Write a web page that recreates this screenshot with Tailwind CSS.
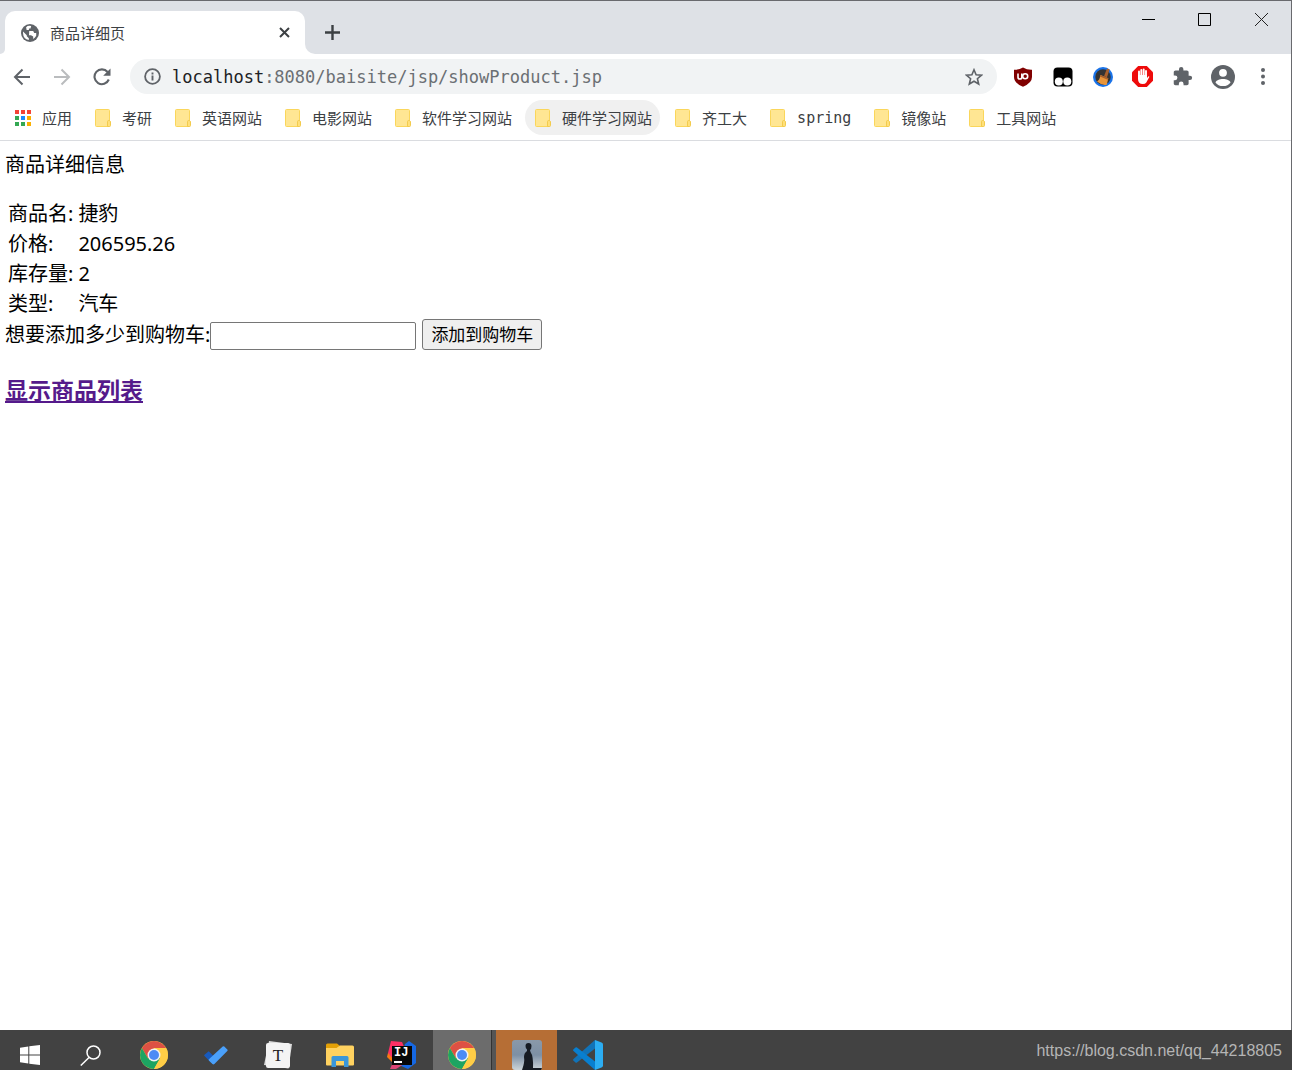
<!DOCTYPE html>
<html lang="zh-CN">
<head>
<meta charset="utf-8">
<title>商品详细页</title>
<script src="https://cdn.jsdelivr.net/npm/@tailwindcss/browser@4"></script>
</head>
<body class="flex h-screen flex-col overflow-hidden bg-white font-['Noto_Sans','Noto_Sans_CJK_SC',sans-serif] text-black">
<svg class="hidden">
  <symbol id="folder" viewBox="0 0 16 18">
    <rect x="0.5" y="0.5" width="14" height="17" rx="1" fill="#ffe693" stroke="#fad65b"/>
    <path d="M12.500 17.500v-5q0-1 1.200-1t1.800 1v4q0 1-1 1z" fill="#ffe07a" stroke="#f3cb4d"/>
  </symbol>
  <symbol id="chrome" viewBox="0 0 28 28">
    <circle cx="14" cy="14" r="14" fill="#ffcd46"/>
    <path d="M14 7h12.100A14 14 0 0 0 1.900 7L8 17.500z" fill="#dd5144"/>
    <path d="M1.900 7A14 14 0 0 0 14 28l6-10.500-6-3.500-6 3.500z" fill="#1da462"/>
    <path d="M14 7h12.100A14 14 0 0 1 14 28l6-10.500z" fill="#ffcd46"/>
    <circle cx="14" cy="14" r="6.500" fill="#f1f1f1"/>
    <circle cx="14" cy="14" r="5" fill="#4c8bf5"/>
  </symbol>
</svg>

<div class="flex min-h-0 flex-1 flex-col border-t border-r border-[#696a6e]">
  <header class="shrink-0">
    <div class="flex h-[53px] items-end bg-[#dee1e6]">
      <div class="h-[43px] w-[5px] bg-white"><div class="h-full rounded-br-[5px] bg-[#dee1e6]"></div></div>
      <div class="flex h-[43px] w-[300px] items-center rounded-t-[10px] bg-white pr-[13px] pl-4">
        <svg class="size-[18px]" viewBox="0 0 18 18"><circle cx="9" cy="9" r="9" fill="#5f6368"/><path d="M2 7.500 5.800 11.300v1l2 1.900v1.800Q2.200 15 2 9zM10.200 2.100Q7 1.300 5.100 3.200L5.600 6h2.300V4.600h1.600zM8.200 7h4l1 1.900h2v2.900q-1 2-3 3.300v-2.700L10 11.200H8z" fill="#fff"/></svg>
        <span class="ml-[11px] flex-1 text-[15px] leading-5 text-[#3c4043]">商品详细页</span>
        <button class="grid size-4 place-items-center" aria-label="关闭标签页"><svg class="size-[11px]" viewBox="0 0 11 11" stroke="#3c4043" stroke-width="2"><path d="m1 1 9 9m0-9-9 9"/></svg></button>
      </div>
      <div class="h-[43px] w-[10px] bg-white"><div class="h-full rounded-bl-[10px] bg-[#dee1e6]"></div></div>
      <button class="mb-3 ml-[7px] grid size-5 place-items-center" aria-label="新标签页"><svg class="size-[15px]" viewBox="0 0 15 15" stroke="#3c4043" stroke-width="2.400"><path d="M7.500 0v15M0 7.500h15"/></svg></button>
      <div class="ml-auto flex self-start">
        <button class="grid h-9 w-14 place-items-center" aria-label="最小化"><svg class="size-[13px]" viewBox="0 0 13 13" stroke="#000"><path d="M0 6.500h13"/></svg></button>
        <button class="grid h-9 w-14 place-items-center" aria-label="最大化"><svg class="size-[13px]" viewBox="0 0 13 13" stroke="#000" fill="none"><path d="M.5.5h12v12H.5z"/></svg></button>
        <button class="grid h-9 w-[59px] place-items-center" aria-label="关闭"><svg class="size-[13px]" viewBox="0 0 13 13" stroke="#222"><path d="m0 0 13 13m0-13L0 13"/></svg></button>
      </div>
    </div>

    <div class="flex items-center gap-[5px] pt-[5px] pr-[11px] pl-1">
      <button class="grid size-[35px] place-items-center" aria-label="后退"><svg class="size-[18px]" viewBox="0 0 18 18" fill="none" stroke="#5f6368" stroke-width="2"><path d="M17 9H2m7.500-7.500L2 9l7.500 7.500"/></svg></button>
      <button class="grid size-[35px] place-items-center" aria-label="前进"><svg class="size-[18px]" viewBox="0 0 18 18" fill="none" stroke="#babcbe" stroke-width="2"><path d="M1 9h15M8.500 1.500 16 9l-7.500 7.500"/></svg></button>
      <button class="grid size-[35px] place-items-center" aria-label="重新加载"><svg class="size-[18px]" viewBox="0 0 18 18"><path d="M15.800 11.500A7.400 7.400 0 1 1 14.600 4" fill="none" stroke="#5f6368" stroke-width="2.100"/><path d="M17.500.5v7.300h-7.300z" fill="#5f6368"/></svg></button>
      <div class="ml-[6px] flex h-[35px] min-w-0 flex-1 items-center rounded-full bg-[#f1f3f4] pr-[14px] pl-[14px]">
        <svg class="size-[17px] shrink-0" viewBox="0 0 17 17"><circle cx="8.500" cy="8.500" r="7.400" fill="none" stroke="#5f6368" stroke-width="1.800"/><path d="M8.500 7.500v5M8.500 4.400v2" stroke="#5f6368" stroke-width="1.900"/></svg>
        <div class="ml-[11px] flex-1 truncate font-['DejaVu_Sans_Mono',monospace] text-[17px] leading-6 text-[#6b6f73]"><span class="text-[#202124]">localhost</span>:8080/baisite/jsp/showProduct.jsp</div>
        <button aria-label="收藏"><svg class="size-[18px]" viewBox="0 0 18 18" fill="none" stroke="#5f6368" stroke-width="1.600"><path d="m9 1.800 2.100 5 5.400.4-4.100 3.500 1.300 5.300L9 13.200 4.300 16l1.300-5.300L1.500 7.200l5.400-.4z"/></svg></button>
      </div>
      <div class="ml-[3px] flex gap-[5px]">
        <button class="grid size-[35px] place-items-center" aria-label="uBlock Origin"><svg class="size-5" viewBox="0 0 20 20"><path d="M10 .5q4 2.500 9 2.300v7.200q0 6-9 9.700-9-3.700-9-9.700V2.800q5 .2 9-2.300" fill="#800000"/><path d="M5 6.500v3.700q0 1.800 1.900 1.800t1.900-1.800V6.500" fill="none" stroke="#fff" stroke-width="1.600"/><circle cx="12.200" cy="9.300" r="2.500" fill="none" stroke="#fff" stroke-width="1.600"/></svg></button>
        <button class="grid size-[35px] place-items-center" aria-label="Tampermonkey"><svg class="size-5" viewBox="0 0 20 20"><rect x=".5" y=".5" width="19" height="19" rx="4" fill="#000"/><circle cx="5.800" cy="14.500" r="4" fill="#fff"/><circle cx="14.300" cy="14.500" r="4" fill="#fff"/></svg></button>
        <button class="grid size-[35px] place-items-center" aria-label="清理"><svg class="size-5" viewBox="0 0 20 20"><circle cx="10" cy="10" r="10" fill="#1a73e8"/><circle cx="10" cy="10" r="7.700" fill="#333"/><path d="m14 1.500 2.600.8-2.600 8-3-1z" fill="#a9602c"/><path d="m7.500 8 7.800 3.200-1.500 6.500q-5 1-9.800-3.200 2.700-1.500 3.500-6.500" fill="#e8953a"/><path d="m7.500 8 7.800 3.200-.5 1.500-7.900-3.200z" fill="#a9602c"/></svg></button>
        <button class="grid size-[35px] place-items-center" aria-label="AdBlock"><svg class="size-[21px]" viewBox="0 0 21 21"><path d="M6.200 0h8.600L21 6.200v8.600L14.800 21H6.200L0 14.800V6.200z" fill="#ee0b0b"/><path d="M7 12V5.500M9.300 10V4M11.700 10V3.500M14 12V5" stroke="#fff" stroke-width="1.900" stroke-linecap="round"/><path d="M6 9h9v3l1.500-1.700q1-.2.800.7l-3 5.500q-1 1.500-3.500 1.500Q6 18 6 13z" fill="#fff"/></svg></button>
        <button class="grid size-[35px] place-items-center" aria-label="扩展程序"><svg class="size-[21px]" viewBox="0 0 24 24" fill="#5f6368"><path d="M20.500 11H19V7c0-1.100-.9-2-2-2h-4V3.500a2.500 2.500 0 0 0-5 0V5H4c-1.100 0-2 .9-2 2v3.800h1.500a2.700 2.700 0 0 1 0 5.400H2V20c0 1.100.9 2 2 2h3.800v-1.500a2.700 2.700 0 0 1 5.400 0V22H17c1.100 0 2-.9 2-2v-4h1.500a2.500 2.500 0 0 0 0-5"/></svg></button>
        <button class="grid size-[35px] place-items-center" aria-label="用户"><svg class="size-6" viewBox="0 0 24 24"><circle cx="12" cy="12" r="12" fill="#5f6368"/><circle cx="12" cy="7.800" r="3.900" fill="#fff"/><path d="M4.500 17.400C5.500 12.700 18.500 12.700 19.500 17.400Q17 21 12 21t-7.500-3.600" fill="#fff"/></svg></button>
        <button class="grid size-[35px] place-items-center" aria-label="菜单"><svg class="h-[17px] w-1" viewBox="0 0 4 17" fill="#5f6368"><circle cx="2" cy="2" r="2"/><circle cx="2" cy="8.500" r="2"/><circle cx="2" cy="15" r="2"/></svg></button>
      </div>
    </div>

    <nav class="flex gap-[5px] border-b border-[#dadce0] pt-[6px] pb-[5px] pl-[5px] text-[15px] leading-5 whitespace-nowrap text-[#3c4043]" aria-label="书签栏">
      <a href="#" class="flex h-[35px] items-center gap-[10px] pr-2 pl-[9px]"><svg class="size-[18px]" viewBox="0 0 18 18"><path d="M1 1h4v4H1zM7 1h4v4H7zM13 1h4v4h-4z" fill="#f44336"/><path d="M1 7h4v4H1zM1 13h4v4H1zM7 13h4v4H7z" fill="#34a853"/><path d="M7 7h4v4H7z" fill="#1a8cff"/><path d="M13 7h4v4h-4zM13 13h4v4h-4z" fill="#fbb000"/></svg>应用</a>
      <a href="#" class="flex h-[35px] items-center gap-[11px] pr-2 pl-[10px]"><svg class="h-[18px] w-4"><use href="#folder"/></svg>考研</a>
      <a href="#" class="flex h-[35px] items-center gap-[11px] pr-2 pl-[10px]"><svg class="h-[18px] w-4"><use href="#folder"/></svg>英语网站</a>
      <a href="#" class="flex h-[35px] items-center gap-[11px] pr-2 pl-[10px]"><svg class="h-[18px] w-4"><use href="#folder"/></svg>电影网站</a>
      <a href="#" class="flex h-[35px] items-center gap-[11px] pr-2 pl-[10px]"><svg class="h-[18px] w-4"><use href="#folder"/></svg>软件学习网站</a>
      <a href="#" class="flex h-[35px] items-center gap-[11px] rounded-full bg-[#f0f0f0] pr-2 pl-[10px]"><svg class="h-[18px] w-4"><use href="#folder"/></svg>硬件学习网站</a>
      <a href="#" class="flex h-[35px] items-center gap-[11px] pr-2 pl-[10px]"><svg class="h-[18px] w-4"><use href="#folder"/></svg>齐工大</a>
      <a href="#" class="flex h-[35px] items-center gap-[11px] pr-2 pl-[10px] font-['DejaVu_Sans_Mono',monospace]"><svg class="h-[18px] w-4"><use href="#folder"/></svg>spring</a>
      <a href="#" class="flex h-[35px] items-center gap-[11px] pr-2 pl-[10px]"><svg class="h-[18px] w-4"><use href="#folder"/></svg>镜像站</a>
      <a href="#" class="flex h-[35px] items-center gap-[11px] pr-2 pl-[10px]"><svg class="h-[18px] w-4"><use href="#folder"/></svg>工具网站</a>
    </nav>
  </header>

  <main class="min-h-0 flex-1 px-[5px] pt-[9px] text-xl leading-[30px]">
    <p class="mb-[19px]">商品详细信息</p>
    <table class="text-left">
      <tbody>
        <tr><th scope="row" class="pr-[5px] pl-[3px] font-normal">商品名:</th><td>捷豹</td></tr>
        <tr><th scope="row" class="pr-[5px] pl-[3px] font-normal">价格:</th><td>206595.26</td></tr>
        <tr><th scope="row" class="pr-[5px] pl-[3px] font-normal">库存量:</th><td>2</td></tr>
        <tr><th scope="row" class="pr-[5px] pl-[3px] font-normal">类型:</th><td>汽车</td></tr>
      </tbody>
    </table>
    <form class="flex items-end">
      <label for="amount">想要添加多少到购物车:</label>
      <input id="amount" type="text" class="h-7 w-[206px] rounded-xs border border-[#767676] px-1 text-base">
      <button type="button" class="ml-[6px] h-[31px] rounded-[3px] border border-[#767676] bg-[#efefef] px-2 text-[17px] leading-6">添加到购物车</button>
    </form>
    <h3 class="mt-[25px] text-[23px] leading-[30px] font-bold"><a href="#" class="text-[#551a8b] underline">显示商品列表</a></h3>
  </main>
</div>

<footer class="flex h-10 shrink-0 items-start overflow-hidden bg-[#424242]">
  <nav class="flex h-[50px] shrink-0" aria-label="任务栏">
    <button class="grid w-[60px] place-items-center" aria-label="开始"><svg class="size-5" viewBox="0 0 20 20" fill="#fff"><path d="M0 2.700 8.300 1.500v8H0zM9.300 1.300 20 0v9.500H9.300zM0 10.500h8.300v8L0 17.300zM9.300 10.500H20V20L9.300 18.700z"/></svg></button>
    <button class="mr-[3px] grid w-[60px] place-items-center" aria-label="搜索"><svg class="size-[21px]" viewBox="0 0 21 21" fill="none" stroke="#fff" stroke-width="1.500"><circle cx="13.500" cy="7.500" r="6.500"/><path d="M9 12.500.8 20.500"/></svg></button>
    <button class="grid w-[62px] place-items-center" aria-label="Chrome"><svg class="size-7"><use href="#chrome"/></svg></button>
    <button class="grid w-[62px] place-items-center" aria-label="待办"><svg class="h-[19px] w-6" viewBox="0 0 24 19"><path d="m4.700 5.200 7 7-4.500 4.500L.5 10q-.7-.7 0-1.300z" fill="#185abd"/><path d="M18.700.6q.8-.8 1.600 0l3 3q.7.7 0 1.400L10.400 18q-1 .9-2 0l-3.500-3.600q-.5-.7 0-1.200z" fill="#4aa0fa"/></svg></button>
    <button class="grid w-[62px] place-items-center" aria-label="Typora"><svg class="size-7" viewBox="0 0 28 28"><path d="m5 0 23 3-3.500 24.500L0 24z" fill="#dedede"/><rect x="2" y="2" width="24" height="25" rx="2" fill="#f4f4f4"/><text x="14" y="20" text-anchor="middle" font-family="Liberation Serif,serif" font-size="17" fill="#222">T</text></svg></button>
    <button class="grid w-[62px] place-items-center" aria-label="文件资源管理器"><svg class="h-6 w-7" viewBox="0 0 28 24"><path d="M0 2q0-1.500 1.500-1.500H11L14 3v4H0z" fill="#e3a006"/><path d="M0 5h10.500L14 2.500h12.500Q28 2.500 28 4v17.500q0 1-1 1H1q-1 0-1-1z" fill="#ffd260"/><path d="M5.500 24V14.500q0-1.500 1.500-1.500h14q1.500 0 1.500 1.500V24H18v-6h-8v6z" fill="#3b97d9"/></svg></button>
    <button class="grid w-[62px] place-items-center" aria-label="IntelliJ IDEA"><svg class="h-7 w-[30px]" viewBox="0 0 30 28"><path d="m1 12 7 0v10l-3-1-5-5z" fill="#f97a12"/><path d="m4 0 11 1 3 7-10 12-7-8z" fill="#fc2f65"/><path d="m18 3 4-3 7 5v17l-8 6-9-4z" fill="#1668e3"/><path d="m3 28 4-9 10 4-8 5z" fill="#dc4474"/><path d="M5 5h20v19H5z" fill="#080808"/><text x="7" y="15" font-family="Liberation Mono,monospace" font-weight="bold" font-size="12" fill="#fff">IJ</text><path d="M7 20h8v2H7z" fill="#fff"/></svg></button>
    <button class="grid w-[59px] place-items-center border-r border-[#333] bg-[#6c6c6c]" aria-label="Chrome 窗口"><svg class="size-7"><use href="#chrome"/></svg></button>
    <span class="w-1 bg-[#555]"></span>
    <button class="grid w-[61px] place-items-center bg-[#b66e35]" aria-label="聊天"><svg class="size-[30px]" viewBox="0 0 30 30"><defs><linearGradient id="sky" x2="0" y2="1"><stop stop-color="#8a99a9"/><stop offset=".5" stop-color="#7d90a5"/><stop offset="1" stop-color="#ccd4d9"/></linearGradient></defs><rect width="30" height="30" rx="3" fill="url(#sky)"/><path d="M13.500 6q0-3 3-3t3 3q0 3-1.500 4l.5 2q3 4 2.500 16h9l-1 2H10q3-8 2-13 0-4 3-6v-1.500Q13.500 8.500 13.500 6" fill="#161b23"/></svg></button>
    <button class="grid w-[62px] place-items-center" aria-label="Visual Studio Code"><svg class="size-[30px]" viewBox="0 0 30 30"><path d="M22 0v8.500L4 22.500q-.8.600-1.500 0l-2-1.800q-.8-.8 0-1.700z" fill="#1173b8"/><path d="M22 30v-8.500L4 7.500q-.8-.6-1.500 0l-2 1.800q-.8.800 0 1.700z" fill="#087fd0"/><path d="M22 0 28.500 2.500Q30 3.200 30 4.500v21q0 1.300-1.500 2L22 30z" fill="#2cadf2"/></svg></button>
  </nav>
  <p class="mt-[9px] mr-[10px] ml-auto font-['Liberation_Sans',sans-serif] text-base leading-6 text-[#b5b5b5]">https://blog.csdn.net/qq_44218805</p>
</footer>
</body>
</html>
